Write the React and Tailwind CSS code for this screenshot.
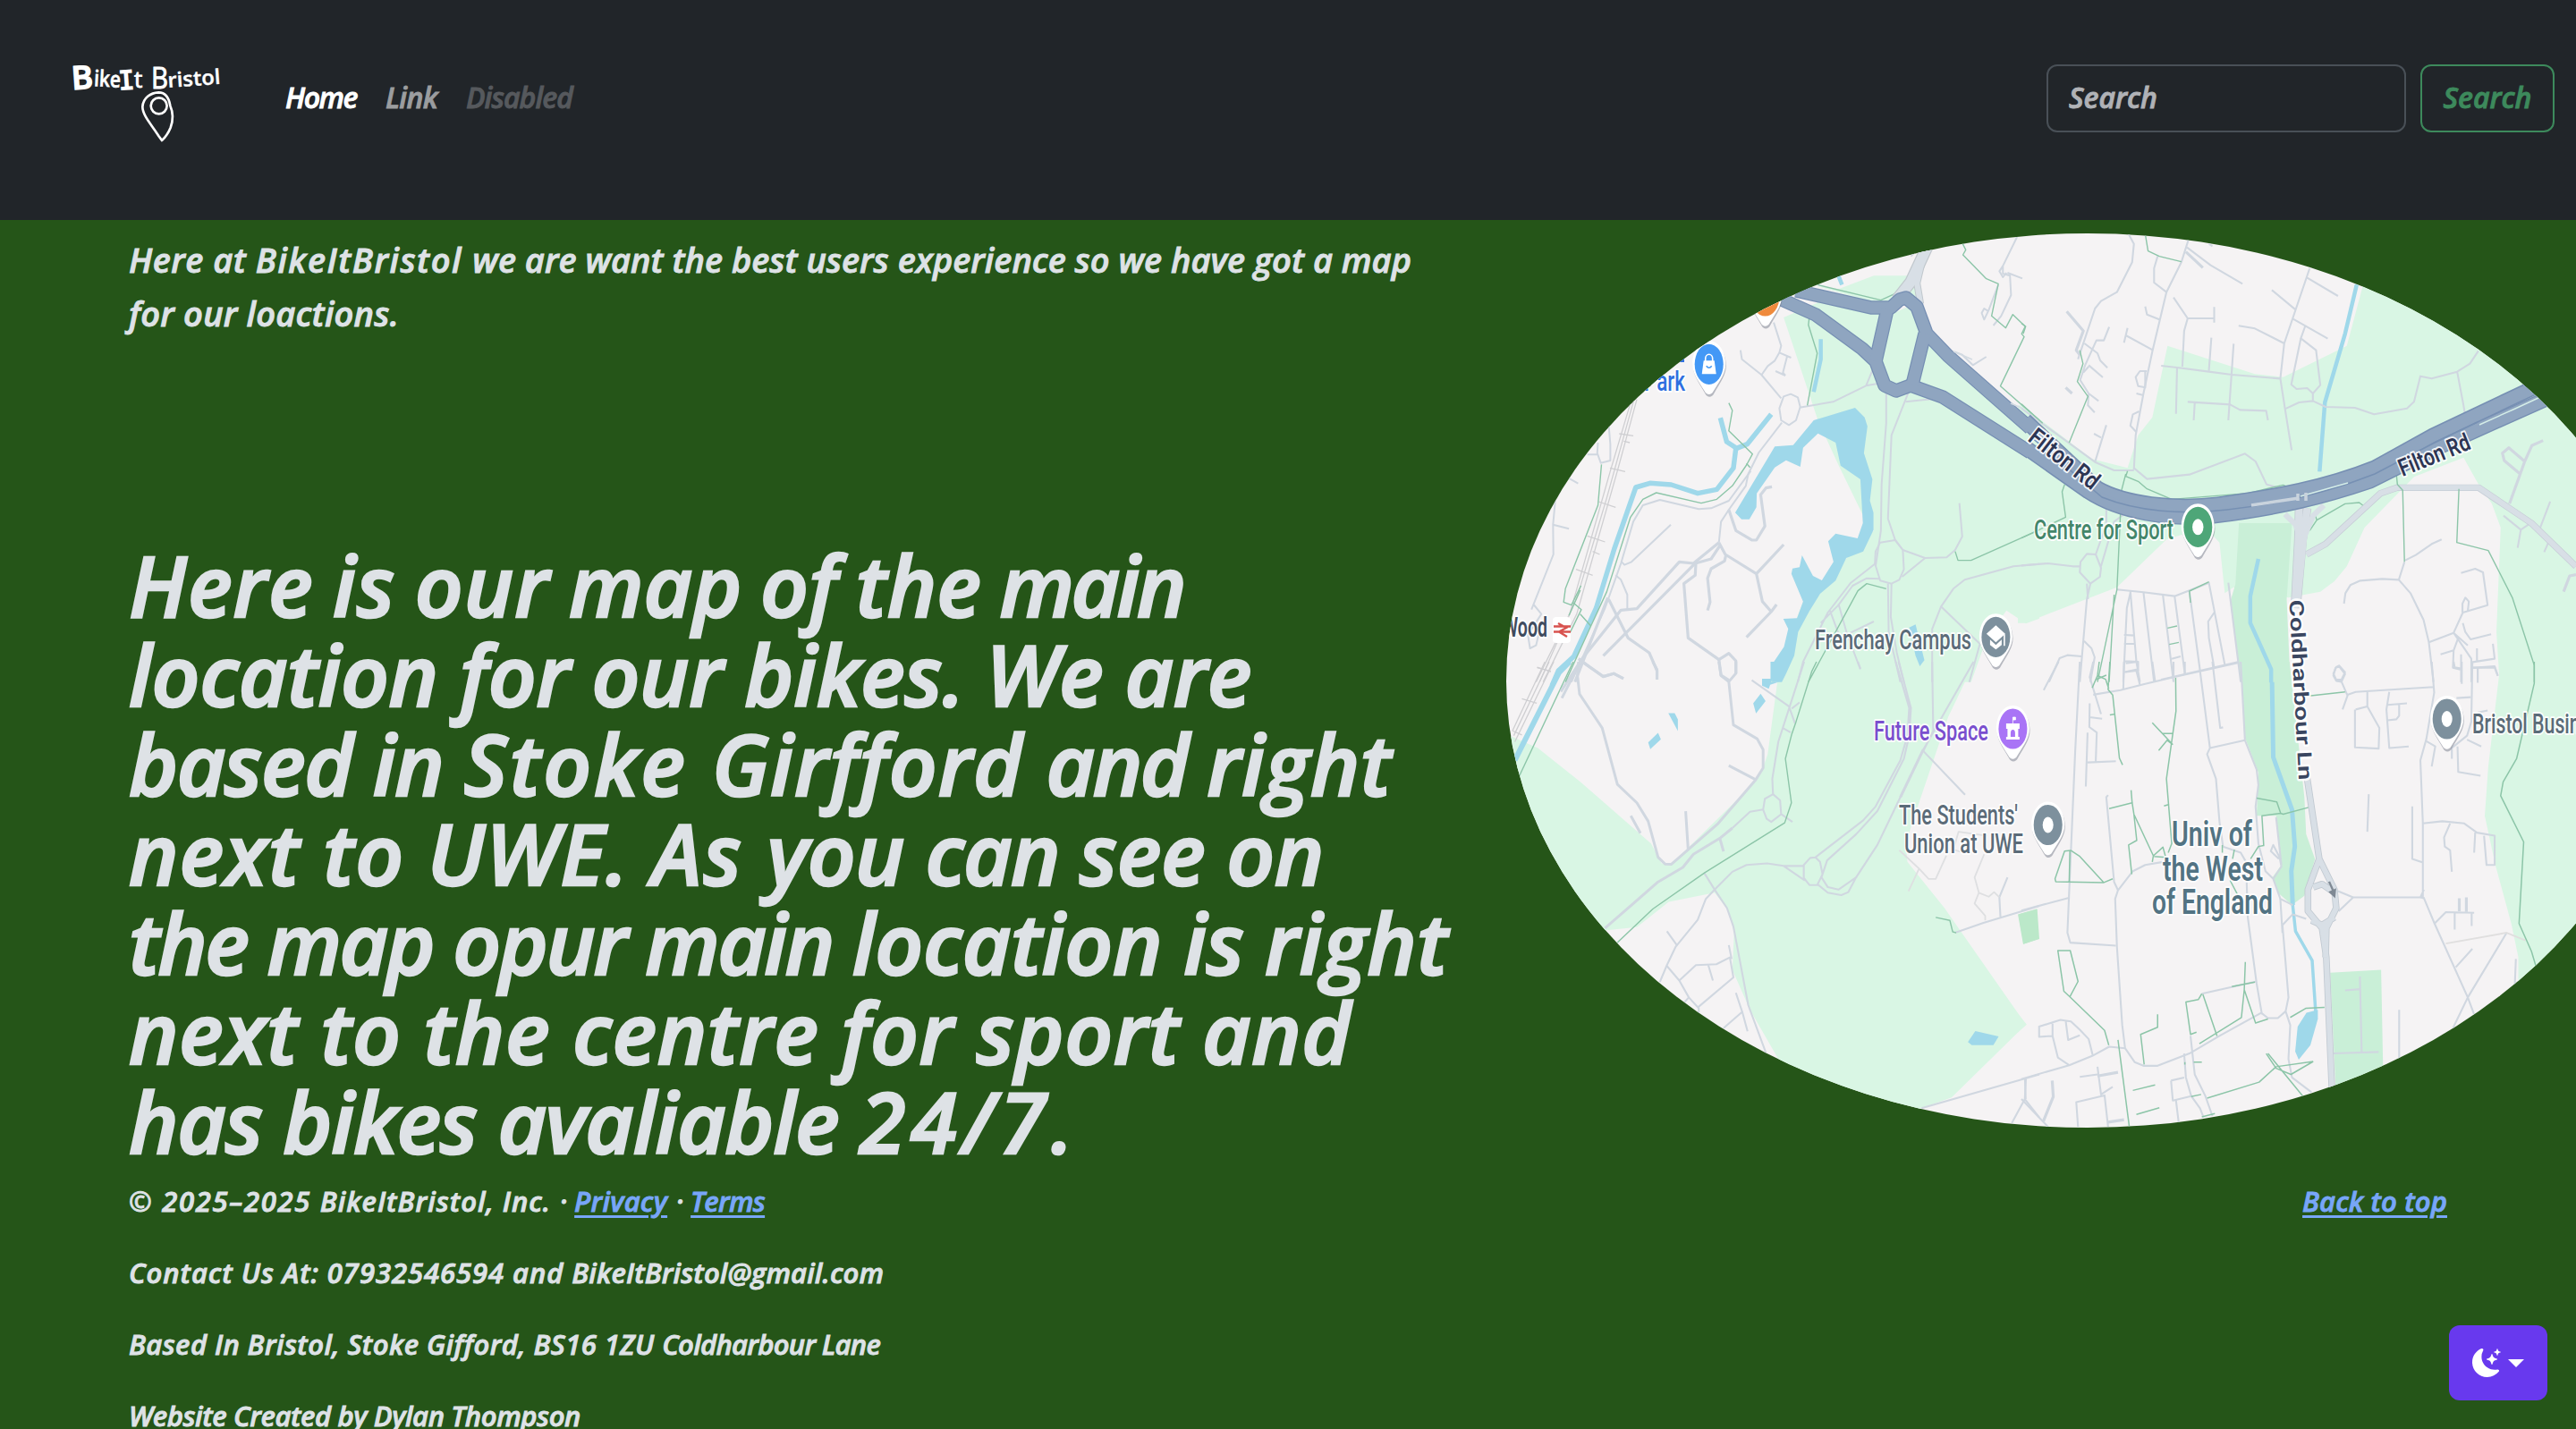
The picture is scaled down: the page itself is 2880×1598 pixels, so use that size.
import React from "react";

const SANS = "'Open Sans', 'Noto Sans', sans-serif";

/* Each map sheet is drawn in its own local units and scaled into page pixels. */
const SHEETS = {
  nw: "translate(1660 240) scale(0.39541 0.33333)",
  ne: "translate(2260 240) scale(0.39541 0.33333)",
  sw: "translate(1660 740) scale(0.39541 0.34439)",
  se: "translate(2260 740) scale(0.39541 0.34439)",
};

function Lines({ d, color = "#d0d7e0", w = 2 }) {
  return d.map((p) => (
    <path key={p} d={p} fill="none" stroke={color} strokeWidth={w} strokeLinejoin="round" vectorEffect="non-scaling-stroke" />
  ));
}

function Areas({ d, color }) {
  return d.map((p) => <path key={p} d={p} fill={color} />);
}

const GREEN = "#d9f6e4";
const WOOD = "#c9efd7";
const WATER = "#9fd8ea";
const FOOT = "#8cc5a8";

function LandNW() {
  return (
    <g transform={SHEETS.nw}>
      <Areas color={GREEN} d={[
        "M845 345L945 293L1140 340L1230 290L1262 420L1568 715V1355L1530 1372L1475 1328L1420 1420L1375 1568H810L900 1300L1100 1060L1070 1010L1000 840L942 690Z",
        "M1000 250L1100 205H1205L1240 290L1130 305L940 240Z",
      ]} />
      <Areas color={WATER} d={[
        "M708 1000L820 778L872 773L930 690L1047 648L1074 680L1082 710L1072 800L1096 888L1089 960L1099 1000V1058L1070 1130L1022 1152L992 1228L948 1272L918 1330L886 1400L875 1480L852 1540L840 1568H812V1510L846 1450L858 1390L844 1356L883 1354L900 1298L867 1205L870 1187L890 1183L897 1143L928 1212L953 1227L986 1165L971 1096L992 1070L1054 1086L1069 1035L1062 888L1006 842L992 765L942 734L900 782L892 846L852 824L820 848L769 935L768 982L748 1022H726Z",
        "M1200 1385L1218 1375L1243 1495L1230 1515L1218 1480Z",
      ]} />
      <Lines color={WATER} w={4.5} d={["M950 418V485L930 595", "M1000 205L1010 235"]} />
      <Lines color={WATER} w={5.5} d={["M810 670L742 770L712 784L684 762L666 682", "M710 784L703 850L656 922L602 935L527 906L467 901L427 915L366 1122L315 1320L252 1482L208 1530L190 1580"]} />
    </g>
  );
}

function LandNE() {
  return (
    <g transform={SHEETS.ne}>
      <Areas color={GREEN} d={[
        "M0 640L200 820L300 850L330 740L370 680L413 440L660 535L740 545L920 440L965 240L1000 200L1568 240V1568H1352L1343 1400L1355 1050L1330 970L1290 900L1250 815L1110 880L970 1050L920 1180L885 1230L845 1265L755 1285L600 1250L575 1270L560 1100L520 1050L410 1090L270 1250L10 1370H-10V640Z",
      ]} />
      <Areas color={WOOD} d={["M615 1035H765L750 1290L760 1568H620L590 1300L605 1240Z"]} />
      <Lines color={WATER} w={4.5} d={["M948 235L915 400L858 630L843 862", "M670 1155L647 1280V1370L670 1430L706 1525V1570"]} />
    </g>
  );
}

function LandSW() {
  return (
    <g transform={SHEETS.sw}>
      <Areas color={GREEN} d={[
        "M835 0L800 300L785 350L765 390L530 655H500L470 590L270 390L150 280L60 235L0 240V870L345 872L430 862L520 780L650 750L690 810L705 880L700 1000L750 1130L830 1290L1000 1500L1230 1452L1320 1415L1530 1178L1300 800L1195 650L1190 590L1230 450L1310 180L1385 0Z",
      ]} />
      <Areas color="#bbe8c9" d={["M1510 820L1562 803L1568 900L1523 917Z"]} />
      <Areas color={WATER} d={["M808 0H862L850 30L832 65L807 75L803 88L784 78V55H808Z", "M780 104L794 128L767 168L759 135Z", "M519 167H537L546 187V225Z", "M490 231L498 252L468 284L462 262Z", "M1387 1199L1453 1217L1438 1245H1377L1366 1235Z", "M1225 0H1241L1233 14Z"]} />
      <Lines color={WATER} w={6} d={["M240 0L210 35L85 320"]} />
    </g>
  );
}

function LandSE() {
  return (
    <g transform={SHEETS.se}>
      <Areas color={WOOD} d={["M620 0H758L800 440L805 560L830 640L800 760L765 790L725 750L710 700L735 660L720 500H665L670 360L630 240Z", "M873 1010L1017 1000L1023 1350L890 1420Z"]} />
      <Areas color={GREEN} d={["M1355 0H1568V1200H1405V960L1385 850L1340 660L1310 500L1320 340Z", "M-12 1140L15 1178L-12 1205Z"]} />
      <Areas color="#bbe8c9" d={["M-10 820L43 803L48 900L5 917Z"]} />
      <Areas color={WATER} d={["M806 1140L838 1130V1160L817 1245L784 1292L774 1265L781 1185Z"]} />
      <Lines color={WATER} w={5} d={["M700 0L708 30L712 310L765 480L773 600L763 680L767 790"]} />
      <Lines color={WATER} w={3.5} d={["M766 780L775 875L822 970L832 1140"]} />
    </g>
  );
}

function RoadsNW() {
  return (
    <g transform={SHEETS.nw}>
      <Lines color="#cfcfd2" w={1.3} d={["M415 620L355 860L240 1340L145 1568", "M430 620L375 860L260 1340L165 1568", "M422 620L345 950L262 1280L155 1568", "M380 735L420 742M393 760L410 765M354 850L397 862M322 963L370 982M290 1078L340 1098M305 1130L325 1140M258 1190L305 1210M148 1520L187 1532"]} />
      <Lines w={2} d={[
        "M838 616L782 537L727 485L723 455", "M817 362L838 440L833 463L866 480M833 463L820 490L800 508L783 537M855 475L843 530L850 540M822 525L850 540",
        "M833 650L845 610L865 602L885 613L892 645L880 690L860 706L838 690Z", "M890 647L985 628L1078 574L1115 566M1078 574L1097 520",
        "M840 698L775 798L745 870L738 910L690 990L668 1030L662 1100",
        "M1135 590V700L1122 905L1120 1060L1105 1180M1200 590L1150 740L1140 1020L1160 1090L1182 1125",
        "M1118 1100L1160 1092L1182 1125L1185 1190L1172 1225L1150 1238L1118 1228L1103 1170L1105 1130Z", "M1182 1125L1245 1152L1306 1150L1330 1125L1350 1080L1342 968M1245 1152L1180 1215",
        "M1568 1172L1495 1180L1357 1225L1325 1255L1290 1315L1265 1390V1568M1290 1315L1400 1440L1370 1568",
        "M1105 1170L1035 1235L970 1335L900 1500L885 1568M1118 1222L1080 1220L1040 1245L1000 1310L950 1370M975 1325L1000 1405M1000 1305L1025 1410L1062 1525M1030 1405L1100 1365",
        "M1140 1238L1142 1400L1175 1568M1150 1238L1148 1350L1165 1470L1185 1568", "M1190 628L1270 618",
        "M320 765L318 800L328 833L355 825V770L350 700M290 805H318M238 885L264 902M200 950L193 1040L238 1054M193 1040L194 1140L132 1325M138 1308L160 1340L122 1410L128 1455L145 1445L152 1410",
        "M752 860L690 960L640 985L605 988L495 957L447 975L420 1030L385 1170L340 1320L245 1568", "M387 1165L395 1175L415 1165L526 1040M370 1210L385 1225L403 1275V1325",
        "M1225 115L1205 140M1505 75L1465 172V198L1485 205L1488 270L1460 340L1438 372M1465 172L1455 190L1465 210L1475 195M1478 195L1520 214M1452 235L1425 320L1412 352L1405 330L1412 315L1425 325M1328 460L1350 470L1380 505L1418 477",
      ]} />
      <Lines w={3.2} d={[
        "M690 990L710 1060L755 1092H768L792 1045L780 940L795 917L812 913", "M662 1100L590 1170L550 1165L430 1322L385 1327L275 1490L215 1600", "M662 1100L680 1140L768 1205L845 1107M768 1205L785 1298L810 1332L740 1418M810 1332L825 1308",
        "M665 1110L640 1155L595 1170L335 1480", "M597 1165L595 1210L563 1238L575 1420L662 1493L690 1472L710 1497V1540", "M682 1142L678 1162L640 1188L630 1220L637 1300L630 1328", "M350 1290L405 1420L465 1470L487 1530V1560", "M348 1285L255 1568M265 1490L335 1550L365 1540L392 1556", "M662 1493L668 1545L690 1562",
      ]} />
      <Lines color={FOOT} w={1.4} d={[
        "M690 632L700 657L690 725L757 803L740 840L700 910L656 955L612 968L485 933L447 955L412 1015L345 1265L300 1380L228 1568", "M740 835L750 848",
        "M917 350L915 370L940 465L912 640", "M330 838L320 975L228 1255L223 1300L245 1310L272 1245M248 1300L273 1325L242 1400M270 1340L300 1380M270 1260L238 1345",
        "M940 235L1120 287L1160 265", "M1350 95L1360 118L1352 135L1418 215L1452 232L1433 340L1473 380L1493 335L1528 375L1518 400L1525 410L1458 575L1568 690",
        "M1568 1058L1375 1160H1338L1330 1130", "M1135 1255L1080 1238L1055 1262L915 1568",
      ]} />
      <Lines color="#c1c8cd" w={14} d={["M1250 110L1205 225L1165 285"]} />
      <Lines color="#c1c8cd" w={8} d={["M1245 115L1222 230L1232 300"]} />
      <Lines color="#d8dfe6" w={11.5} d={["M1250 110L1205 225L1165 285"]} />
      <Lines color="#d8dfe6" w={6} d={["M1245 115L1222 230L1232 300"]} />
    </g>
  );
}

function RoadsNE() {
  return (
    <g transform={SHEETS.ne}>
      <Lines w={2.1} d={[
        "M303 65L318 98L313 160L270 260L225 290L208 315L160 485", "M472 85L452 160L410 260L370 460L345 600L323 740L318 855", "M468 110L535 170L625 232", "M385 140L375 180V228L410 260M350 308L355 335L390 352M300 380L290 430M295 405L372 455M430 278L470 348H543M545 310V362M470 348L460 390L455 510M537 413L530 523M600 433L585 690M395 507L440 513L530 527L595 537L732 550",
        "M440 513L437 668M470 628L590 637L618 655L692 658L697 690M490 632L487 690", "M815 180L743 432L732 550L745 650L764 790M808 212L895 273M708 253L776 320M768 350L866 416M614 373L660 382L743 432M802 375L790 415L833 455L845 572L824 600L808 582L778 585L763 570L790 415M824 600V625M745 652L785 630L824 625L860 645L943 648L997 670L1090 650L1110 628L1128 542L1160 550L1232 527L1268 500L1292 457M1232 527L1250 640L1257 690",
        "M178 432L215 465L223 490L243 514M248 377L233 422H212L180 505L166 555L190 600L218 625M190 505L230 546M190 600L188 640L207 664M190 510L175 530", "M0 650L110 745L208 830L262 858H318", "M240 706L208 830M205 735L225 748", "M355 525H335L323 545L330 575L350 580V525M325 600L345 606M333 660L315 670L308 708L325 730",
        "M318 850L355 887L475 872L632 802L662 828L693 905L740 920", "M240 978V1040L210 1140L185 1138L167 1165L165 1200L195 1238L222 1215L225 1185L210 1140M165 1180L145 1180L75 1170L0 1177M225 1180L262 1030L290 1005M195 1238L185 1290L165 1568M185 1238L188 1290",
        "M270 1258L345 1267L433 1280L530 1235L575 1510M308 1268L298 1320L288 1568M345 1267L375 1568M400 1277L430 1568M433 1280L462 1540M475 1265L505 1530M545 1335L528 1365L530 1420L545 1520M585 1235L620 1568M395 1560L615 1500M290 1410L320 1412M290 1440H320M292 1498L330 1500M290 1535L330 1525M425 1490L450 1482M308 1265L325 1500L335 1568",
        "M177 1430L198 1455L207 1485L195 1568M170 1482L130 1478L108 1488L78 1568",
        "M1083 1165L1067 1225L1020 1222L958 1228L930 1243L916 1270L912 1305M1067 1225L1100 1270L1137 1360L1152 1435L1165 1568M1085 1160L1115 1142L1160 1105L1188 1090M1152 1435L1222 1403L1248 1335L1318 1310L1305 1200L1283 1188L1243 1202M1247 1335V1305L1255 1285L1265 1298L1262 1330M1222 1403L1272 1490V1568M1248 1370L1255 1400L1270 1425L1328 1408M1185 1475L1222 1462L1235 1420M1222 1462L1220 1520L1243 1527M1243 1475V1568M1272 1502L1338 1490L1333 1440M1288 1455V1500M1275 1520H1338L1347 1548M1290 1520V1560M1222 1403L1262 1445",
        "M898 1513L915 1535L905 1560H890L882 1540L890 1518Z", "M1363 1010L1412 1057L1440 1035M1412 1057L1403 1118M1495 963L1467 1050M1490 1100L1478 1132", "M530 98L540 106",
      ]} />
      <Lines w={3.2} d={["M128 325L175 390L155 455L165 470", "M465 125L513 178", "M125 580L143 600", "M1475 758L1443 775L1423 828L1380 970M1423 828L1378 782L1360 800L1365 825L1410 870", "M1568 1208L1550 1212L1533 1265"]} />
      <Lines color="#c6cdd6" w={7.4} d={["M806 1140L860 1105L1015 935L1062 916H1293L1442 1035L1568 1180"]} />
      <Lines color="#d8dfe6" w={6} d={["M806 1140L860 1105L1015 935L1062 916H1293L1442 1035L1568 1180"]} />
      <Lines color={FOOT} w={1.4} d={["M350 65L358 122L390 140L452 158", "M165 455L174 500L158 560L188 610L135 765", "M295 870L283 925M295 878L330 895L355 920L425 955L640 935L740 907L755 915M295 878L300 860", "M122 905L115 930L125 1015L0 1085M283 925L270 1258L215 1568M262 1275L248 1568", "M530 1232L475 1263L478 1302M413 1387L440 1380M418 1442L445 1435M210 1560L240 1545", "M1060 870L1063 905L1078 925L1083 1165M1237 920L1231 1100L1320 1127L1388 1285L1450 1512V1568", "M815 1060L835 1025L915 970L955 966L965 975M835 1025L830 1005", "M0 365L12 375L5 400M0 635L60 700"]} />
      <Lines color="#c1c9d1" w={9.5} d={["M785 985L783 1090L773 1320", "M808 985L795 1090L780 1290"]} />
      <Lines color="#d8dfe6" w={8} d={["M785 985L783 1090L773 1320M808 985L795 1110L780 1290"]} />
      <Lines color="#d8dfe6" w={6} d={["M745 1005L775 1040L790 1090M855 975L825 1010L800 1080"]} />
    </g>
  );
}

function RoadsSW() {
  return (
    <g transform={SHEETS.sw}>
      <Lines color="#cfcfd2" w={1.3} d={["M170 0L78 225M182 0L82 240M195 0L85 260M148 18L187 32M105 120L147 135M80 225L105 238"]} />
      <Lines w={3} d={["M265 0L262 45L268 105L332 215L375 398L430 458L462 518L490 635L510 657L527 658L575 610L660 525L765 385L787 345V285L770 250L703 205L690 65L710 38V0M662 0L668 45L690 65", "M275 0L335 48L365 38L392 55M475 0L487 25V48M268 5L218 118", "M568 485L575 610M690 337L765 382M413 500L440 557", "M340 865L420 785L490 715L560 668L590 625L665 573L700 540M665 575L675 616", "M1240 285L1175 440"]} />
      <Lines w={2.1} d={["M903 0L830 260L813 380L815 430L835 450L838 495L810 520L797 510L787 480L792 445L815 430M787 480L750 487L700 540M838 495L870 520M755 60L860 145L877 200M890 132L868 152M843 215L865 230M1055 0L1062 22", "M1162 0L1200 150L1195 240L1175 320L1105 470L1070 515L935 635L920 637L902 660V702L918 725H940L955 690L948 650L935 635M1170 0L1205 150L1200 240L1185 315L1110 485L1050 560L968 645L952 700L970 732L1000 740L1050 700L1028 748L1008 758L970 750L940 722", "M902 663H845L798 655L740 660L700 682L650 740L625 770L602 838L540 925L515 985L495 1040M845 663L905 710M620 685L650 740L685 800L703 860L745 1115L795 1270", "M515 875L543 920M515 988L550 1035L577 1090L605 1125V1140M550 1035L597 985L655 982L693 960L703 1025L603 1122M632 985L645 1035M690 920L698 965M577 1090L565 1105M675 1190L728 1137L710 1075M728 1137L743 1200", "M1382 0L1240 285L1175 440L1110 595L1050 700M1265 0L1268 225L1240 290L1358 432", "M1568 793L1410 848L1330 880M1458 828L1455 765L1478 700", "M1235 1450L1568 1340M1530 1355L1527 1420L1490 1498M1527 1420L1568 1480"]} />
      <Lines color="#dedfe1" w={1.8} d={["M1172 612L1228 672L1198 745M1228 672L1255 705H1275L1305 630M1340 550L1325 610L1345 617M1412 625L1385 700L1397 750L1385 785L1415 825V840M1397 750L1425 763L1440 748L1455 765M1340 552L1420 565"]} />
      <Lines color={FOOT} w={1.4} d={["M250 0L98 370", "M938 0L925 30L880 195L868 235L850 315L867 458L848 523L622 685L475 803L375 912", "M1275 830L1315 840L1323 877L1333 880"]} />
    </g>
  );
}

function RoadsSE() {
  return (
    <g transform={SHEETS.se}>
      <Lines w={2.1} d={[
        "M165 0L152 290L130 880L138 912L267 922M203 0L193 50L225 170M203 107L280 92L350 72L430 50L615 3M193 135L192 212L213 230L210 325M193 180L228 185M187 230L182 405M187 327L267 323M105 0L63 92",
        "M505 30L533 280L525 300L550 380L560 520L570 600M540 0L562 215L570 213M533 280L632 255M620 0L632 255L665 350L670 400L662 470L670 590L690 680L712 705L735 665L730 635L712 595L705 615L728 640M720 505L735 660M712 705L732 770L767 790",
        "M290 0L288 90M295 5L330 0V30M295 33L330 28M325 30L335 75M370 0L378 65M430 0V50M462 0V42",
        "M245 433L240 440L262 715L273 742L265 770L270 925L285 1180L293 1255L320 1300L345 1312H385L475 1272L560 1215L678 1140L697 1157H725L747 1135L760 1180L755 1290L765 1350L820 1398M273 742L315 680L350 660L400 650M570 600L620 620L635 650L640 830L665 1045L680 1145M767 820L738 855L755 1090L747 1135M732 770L738 880M767 820L805 835",
        "M0 808L132 767M293 1255L248 1250L200 1280L135 1310L0 1355M135 1310L103 1285L88 1215L50 1218V1185L110 1163L140 1168L165 1195L190 1225L202 1280M88 1175V1215M125 1165L132 1228L165 1213",
        "M0 1420L75 1510M10 1355L12 1420M165 1348L215 1340M215 1315L225 1405L258 1380M160 1510L155 1430L235 1408L245 1510M423 1360L460 1350M423 1360L428 1425L483 1410M437 1425L445 1500M460 1272L465 1350L480 1410L505 1450L515 1480M478 1215L490 1340L520 1410L540 1475",
        "M665 1038L510 1078",
        "M895 745L938 765H1135V525L1190 518L1252 525L1288 555L1338 565V660H1315L1308 565M938 765L897 810M1138 768L1128 765L1138 740M1283 555L1280 620M1212 525L1195 570L1197 600L1212 612L1217 682M1105 470V640L1135 652M982 430L978 552",
        "M898 15L915 40L905 65L890 62L882 45L888 20ZM905 65L922 110L908 155M920 108L945 98L1165 82M943 155V278L1010 282L1012 215L978 145L945 155M978 145V98M1040 98L1032 155L1040 280L1095 275M1035 140L1090 135M1068 140V175L1060 187L1035 190M1160 0L1167 100L1145 250L1128 320L1135 525M1137 765L1168 850L1262 1090L1280 1145M1168 850L1200 813L1280 815M1225 815V870M1273 815V858M1228 992L1275 932M1398 965L1395 1050M1372 880L1262 1090L1220 1190",
        "M1145 258L1170 275L1160 340M1217 315V280L1260 240L1272 195L1275 0M1233 275L1235 358L1298 370M1260 253L1300 275M1230 118L1270 115M1290 165L1318 158M1275 20L1338 15L1347 45M1290 20V68M1245 0V72M1222 0L1225 18L1243 22",
        "M957 1022L962 1270M915 1067L957 1063M880 1272L1010 1267M1068 1130V1290",
      ]} />
      <Lines w={3.2} d={["M215 1345L273 1333M87 1360L90 1412L62 1492M245 1495L290 1487M1238 768V810M1258 765V812"]} />
      <Lines color="#e0dfdf" w={2} d={["M1200 915L1372 880L1425 905"]} />
      <Lines color={FOOT} w={1.5} d={["M220 0L215 45L200 85M250 0L245 90L258 108L277 313L286 335M215 45L238 57L247 88M250 173L265 170", "M436 52L437 160L410 380L425 590L415 620M370 198L427 268L412 255L388 288M397 233H428M403 468L418 463", "M248 477L313 458L310 417M313 458L318 495L373 630L370 650M373 630L400 602L408 635L375 632M318 495L326 580L303 595L312 690", "M258 705L233 717L97 714L95 705L122 615L140 613L165 632L233 717M137 613L135 717", "M103 938H138L160 1038L137 1088L120 1070ZM137 1088L235 1197L247 1245M385 1145V1187L337 1210L347 1308M273 1228L305 1510", "M665 443L722 455L733 492L680 500L685 597L670 600L648 640M733 492L740 495L812 473M568 595V620M602 610L597 640M590 710L615 765", "M633 975L630 1065L662 1173L697 1160M660 1040L595 1055M510 1078L500 1097L465 1105L478 1210L495 1203M513 1080L553 1215M630 1065L622 1155L503 1240M487 1300H510M462 1300V1308M480 1412L508 1405", "M760 1155L805 1125L857 1122M525 1417L672 1365L720 1315L825 1298M692 1272L720 1320L762 1340L825 1298M697 1272L795 1410M315 1392L378 1374M325 1470L390 1448M510 1478L547 1467", "M795 113L915 98", "M1450 0V70L1400 315L1362 390L1355 435L1420 585L1407 850L1442 940L1455 990"]} />
      <Lines color="#c1c9d1" w={7.5} d={["M808 380L842 640L810 740V810L850 865L862 960L878 1390M842 640L885 740L890 800L862 865L860 960M825 732L850 722L885 750M820 840L850 855L885 830"]} />
      <Lines color="#d8dfe6" w={5.8} d={["M808 380L842 640L810 740V810L850 865L862 960L878 1390M842 640L885 740L890 800L862 865L860 960M825 732L850 722L885 750M820 840L850 855L885 830"]} />
      <path d="M870 714L882 745" stroke="#7f8994" strokeWidth="6" />
      <path d="M868 747L890 735L887 768Z" fill="#7f8994" />
    </g>
  );
}

/* Dual carriageway in page pixels. */
const MOTORWAY = [
  "M2008 325L2092 344H2114L2124 335L2131 333L2143 343L2154 373L2178 398L2270 479",
  "M1992 335L2030 352L2082 390L2097 404L2107 431L2120 437L2136 431L2172 444L2270 506",
  "M2110 346L2097 404M2152 373L2138 430",
];
const TRUNK = [
  "M2264 470L2345 546C2375 563 2430 570 2480 564C2545 555 2600 545 2655 523L2720 487L2800 449L2834 433",
  "M2264 500L2335 550C2370 573 2425 582 2475 577C2550 568 2600 555 2650 538L2720 503L2800 467L2856 442",
];

function Motorway() {
  return (
    <g>
      <Lines color="#768fb3" w={15.5} d={MOTORWAY} />
      <Lines color="#768fb3" w={17} d={TRUNK} />
      <Lines color="#8fa5c0" w={13} d={MOTORWAY} />
      <Lines color="#8fa5c0" w={14} d={TRUNK} />
      <Lines color="#7690b3" w={1.6} d={["M2270 488L2350 556C2390 572 2440 576 2490 570C2560 562 2610 548 2655 530L2720 496L2770 472"]} />
      <Lines color="#d5eee8" w={1.4} d={["M2572 555L2625 540M2772 475L2812 457L2840 444"]} />
      <Lines color="#c9d3dd" w={3.5} d={["M2517 565L2570 557M2569 552V560M2578 551V560"]} />
      <Lines color="#d3dbe2" w={1.6} d={["M2184 393L2205 402M2248 451L2262 457"]} />
    </g>
  );
}

function Pin({ x, y, color, children }) {
  return (
    <g transform={`translate(${x} ${y})`}>
      <path d="M0 -25C11 -25 18.500 -14 18.500 0C18.500 10 13 17 5 31C2.500 36 -2.500 36 -5 31C-13 17 -18.500 10 -18.500 0C-18.500 -14 -11 -25 0 -25Z" fill="#6b7280" opacity="0.45" transform="translate(0.6 1.8)" />
      <path d="M0 -26C11 -26 18.500 -14 18.500 0C18.500 10 13 17 5 30C2.500 35 -2.500 35 -5 30C-13 17 -18.500 10 -18.500 0C-18.500 -14 -11 -26 0 -26Z" fill="#fff" />
      <ellipse rx="16" ry="22.600" fill={color} />
      {children}
    </g>
  );
}

function Label({ x, y, w, size = 31, weight = 500, color, rotate = 0, children }) {
  return (
    <text
      transform={`translate(${x} ${y}) rotate(${rotate})`}
      textLength={w}
      lengthAdjust="spacingAndGlyphs"
      fontFamily="Roboto, sans-serif"
      fontSize={size}
      fontWeight={weight}
      fill={color}
      stroke="#ffffff"
      strokeWidth="4"
      strokeOpacity="0.9"
      strokeLinejoin="round"
      paintOrder="stroke"
    >
      {children}
    </text>
  );
}

function CampusMap() {
  return (
    <svg className="block h-[1000px] w-[1300px] max-w-none rounded-[50%] bg-[#f5f3f4]" viewBox="1684 261 1300 1000">
      <LandSW />
      <LandSE />
      <LandNW />
      <LandNE />
      <RoadsSW />
      <RoadsSE />
      <RoadsNW />
      <RoadsNE />
      <Motorway />

      <rect x="1875" y="401" width="8" height="4" fill="#2f6fe0" />
      <Label x={1838} y={436.500} w={46} color="#2f6fe0">Park</Label>
      <Label x={1680} y={711.700} w={50} weight={600} color="#3f4b5e">Wood</Label>
      <rect x="1736" y="690" width="20" height="29" rx="4" fill="#fff" />
      <path d="M1737 700.500H1756M1737 706.500H1756M1742 697L1751 702L1743 706.500L1752 712" fill="none" stroke="#d8534f" strokeWidth="2.400" />

      <Label x={2029} y={725.700} w={175} color="#5b6b78">Frenchay Campus</Label>
      <Label x={2274} y={602.500} w={156} color="#43866a">Centre for Sport</Label>
      <Label x={2095} y={827.800} w={128} color="#7a4fce">Future Space</Label>
      <Label x={2123} y={921.800} w={133} color="#5b6b78">The Students'</Label>
      <Label x={2129} y={953.500} w={133} color="#5b6b78">Union at UWE</Label>
      <Label x={2764} y={819.500} w={154} color="#5b6b78">Bristol Business</Label>
      <Label x={2428} y={945.600} w={90} size={39} weight={600} color="#527383">Univ of</Label>
      <Label x={2418} y={985.200} w={112} size={39} weight={600} color="#527383">the West</Label>
      <Label x={2406} y={1022.400} w={135} size={39} weight={600} color="#527383">of England</Label>
      <Label x={2266} y={492} w={92} size={27} weight={600} color="#2d3553" rotate={38}>Filton Rd</Label>
      <Label x={2686} y={533} w={84} size={27} weight={600} color="#2d3553" rotate={-22}>Filton Rd</Label>
      <Label x={2559.500} y={671} w={202} size={22} weight={600} color="#3a4660" rotate={87}>Coldharbour Ln</Label>

      <Pin x={1973.600} y={331} color="#ef8a3c">
        <path d="M5 3V9" stroke="#fff" strokeWidth="2" />
      </Pin>
      <Pin x={1910.700} y={407.300} color="#4398f6">
        <path d="M-6 -4H6L8 11H-8Z" fill="#fff" />
        <path d="M-4 -3V-6A4 5 0 0 1 4 -6V-3" fill="none" stroke="#fff" strokeWidth="1.600" />
        <path d="M-3 2Q0 6 3 2" fill="none" stroke="#4398f6" strokeWidth="1.500" />
      </Pin>
      <Pin x={2231.400} y={712.300} color="#7d909d">
        <path d="M0 -13L10.500 -3.500L0 6L-10.500 -3.500Z" fill="#fff" />
        <path d="M-6.500 3V9L0 14L6.500 9V3L0 9Z" fill="#fff" />
        <path d="M9.500 -3V10" stroke="#fff" strokeWidth="1.600" />
      </Pin>
      <Pin x={2250.400} y={815} color="#a974f6">
        <path d="M-7.500 -6H7.500V0H6V9H7.500V12H-7.500V9H-6V0H-7.500Z" fill="#fff" />
        <path d="M0 -6V-13H3V-10H0" fill="#fff" stroke="#fff" strokeWidth="0.800" />
        <path d="M-2.500 9V5A2.500 4 0 0 1 2.500 5V9Z" fill="#a974f6" />
      </Pin>
      <Pin x={2289.700} y={922.500} color="#7d909d"><ellipse rx="6" ry="9" fill="#fff" /></Pin>
      <Pin x={2457.300} y={589.300} color="#4ea678"><ellipse rx="6.200" ry="9" fill="#fff" /></Pin>
      <Pin x={2735.700} y={804} color="#7d909d"><ellipse rx="6" ry="9" fill="#fff" /></Pin>
    </svg>
  );
}

function Logo() {
  const hand = { fontFamily: SANS, fill: "#fff", stroke: "#fff", fontWeight: 600 };
  return (
    <svg className="mt-2.5 h-[110px] w-[190px] shrink-0 not-italic" viewBox="0 0 190 110">
      <text {...hand} x="10" y="39.500" fontSize="36" strokeWidth="1.500" textLength="24" lengthAdjust="spacingAndGlyphs" transform="rotate(-4 20 30)">B</text>
      <text {...hand} x="35" y="37" fontSize="25" strokeWidth="0.600" textLength="30" lengthAdjust="spacingAndGlyphs" transform="rotate(3 50 30)">ike</text>
      <text {...hand} x="62" y="40.500" fontSize="31" strokeWidth="0" fontFamily="'DejaVu Sans Mono', monospace" transform="rotate(-4 74 30)">I</text>
      <text {...hand} x="80" y="38" fontSize="26" strokeWidth="0.900" fontWeight="500">t</text>
      <text {...hand} x="99" y="39" fontSize="33" strokeWidth="0.900" fontWeight="500" textLength="19" lengthAdjust="spacingAndGlyphs">B</text>
      <text {...hand} x="118" y="38" fontSize="23" strokeWidth="0.400" textLength="59" lengthAdjust="spacingAndGlyphs" transform="rotate(-4 118 38)">ristol</text>
      <g transform="scale(0.33333)" fill="none" stroke="#fff" strokeWidth="8" strokeLinejoin="round">
        <path d="M268 178C270 148 295 131 322 130C348 130 357 150 361 175C373 203 371 224 362 248C355 265 345 280 333 291L322 276C300 240 268 208 268 178Z" />
        <ellipse cx="323" cy="175" rx="27" ry="27" />
      </g>
    </svg>
  );
}

function Navbar() {
  return (
    <header className="h-[246px] bg-[#212529]">
      <div className="flex h-[220px] items-center pr-6 pl-[70px]">
        <Logo />
        <nav className="ml-[59px] flex items-center gap-8 pb-0.5 text-[32px] leading-[48px]">
          <a className="w-[80px] tracking-[-1.45px] text-white">Home</a>
          <a className="w-[58px] tracking-[-0.64px] text-[#9b9d9f]">Link</a>
          <a className="tracking-[-0.94px] text-[#56595d]">Disabled</a>
        </nav>
        <form className="ml-auto flex gap-4 text-[32px] leading-[48px]">
          <div className="h-[76px] w-[402px] rounded-xl border-2 border-[#495057] px-[23px] pt-[11px] text-[#b0b2b6]">Search</div>
          <button type="button" className="h-[76px] w-[150px] rounded-xl border-2 border-[#3d8a5c] pb-0.5 text-center text-[#3d8a5c] italic">Search</button>
        </form>
      </div>
    </header>
  );
}

function Story() {
  return (
    <div className="w-[1540px] whitespace-pre">
      <p className="pt-[14px] text-[38px] leading-[60px]">
        <span className="block">
          <span className="tracking-[0.5px]">{"Here at "}</span>
          <span className="tracking-[1.5px]">{"BikeItBristol "}</span>
          <span className="tracking-[0.01px]">we are want the best users experience so we have got a map</span>
        </span>
        <span className="block tracking-[0.22px]">for our loactions.</span>
      </p>
      <h1 className="mt-[224px] text-[94px] leading-[100px] [-webkit-text-stroke:2.5px_#dee2e6]">
        <span className="block [word-spacing:-4px]">
          <span className="tracking-[1px]">{"Here is our "}</span>
          <span className="tracking-[0.1px]">{"map of the "}</span>
          <span className="tracking-[-3.5px]">main</span>
        </span>
        <span className="block tracking-[-0.34px]">location for our bikes. We are</span>
        <span className="block">
          <span className="tracking-[-1.4px]">{"based in "}</span>
          <span className="tracking-[2.7px]">{"Stoke "}</span>
          <span className="tracking-[1px]">{"Girfford "}</span>
          <span className="tracking-[-2.5px]">{"and "}</span>
          <span className="tracking-[0.5px]">right</span>
        </span>
        <span className="block">
          <span className="tracking-[1.1px]">{"next to "}</span>
          <span className="tracking-[1px]">{"UWE. "}</span>
          <span className="tracking-[2px]">{"As "}</span>
          <span className="tracking-[-0.7px]">{"you "}</span>
          <span className="tracking-[-1.6px]">{"can "}</span>
          <span className="tracking-[-0.4px]">see on</span>
        </span>
        <span className="block">
          <span className="tracking-[-2.46px]">{"the map opur main "}</span>
          <span className="tracking-[-0.26px]">{"location "}</span>
          <span className="tracking-[-0.7px]">{"is "}</span>
          <span className="tracking-[0.1px]">right</span>
        </span>
        <span className="block tracking-[0.56px]">next to the centre for sport and</span>
        <span className="block">
          <span className="tracking-[-1.17px]">{"has bikes avaliable "}</span>
          <span className="tracking-[5.7px]">24/7.</span>
        </span>
      </h1>
    </div>
  );
}

function Footer() {
  return (
    <footer className="mt-[15px] flex items-start justify-between pr-36 pl-36 text-[31px] leading-[48px] whitespace-pre">
      <div className="flex flex-col gap-8">
        <p className="flex">
          <span className="tracking-[1.7px]">{"© 2025–2025 "}</span>
          <span className="tracking-[1px]">BikeItBristol, Inc.</span>
          <span className="ml-[10px] w-[16px]">·</span>
          <a className="tracking-[0.26px] text-[#78a6f8] underline decoration-[3px] underline-offset-4">Privacy</a>
          <span className="ml-[10px] w-[16px]">·</span>
          <a className="tracking-[-0.71px] text-[#78a6f8] underline decoration-[3px] underline-offset-4">Terms</a>
        </p>
        <p>
          <span className="tracking-[0.94px]">{"Contact Us At: 07932546594 and "}</span>
          <span className="tracking-[0.11px]">BikeItBristol@gmail.com</span>
        </p>
        <p>
          <span className="tracking-[0.4px]">{"Based In Bristol, Stoke Gifford, BS16 1ZU "}</span>
          <span className="tracking-[-0.7px]">Coldharbour Lane</span>
        </p>
        <p className="tracking-[-0.39px]">Website Created by Dylan Thompson</p>
      </div>
      <a className="tracking-[0.12px] text-[#78a6f8] underline decoration-[3px] underline-offset-4">Back to top</a>
    </footer>
  );
}

function ThemeButton() {
  return (
    <button type="button" aria-label="Toggle theme" className="absolute right-8 bottom-8 flex h-[84px] w-[110px] items-center justify-center gap-2 rounded-xl bg-[#6839ee]">
      <svg className="h-8 w-8" viewBox="0 0 16 16" fill="#fff">
        <path d="M6 .278a.77.77 0 0 1 .08.858 7.200 7.200 0 0 0-.878 3.460c0 4.021 3.278 7.277 7.318 7.277q.792-.001 1.533-.160a.79.79 0 0 1 .810.316.73.73 0 0 1-.031.893A8.350 8.350 0 0 1 8.344 16C3.734 16 0 12.286 0 7.710 0 4.266 2.114 1.312 5.124.060A.75.75 0 0 1 6 .278" />
        <path d="M10.794 3.148a.217.217 0 0 1 .412 0l.387 1.162c.173.518.579.924 1.097 1.097l1.162.387a.217.217 0 0 1 0 .412l-1.162.387a1.730 1.730 0 0 0-1.097 1.097l-.387 1.162a.217.217 0 0 1-.412 0l-.387-1.162A1.730 1.730 0 0 0 9.310 6.593l-1.162-.387a.217.217 0 0 1 0-.412l1.162-.387a1.730 1.730 0 0 0 1.097-1.097zM13.863.099a.145.145 0 0 1 .274 0l.258.774c.115.346.386.617.732.732l.774.258a.145.145 0 0 1 0 .274l-.774.258a1.160 1.160 0 0 0-.732.732l-.258.774a.145.145 0 0 1-.274 0l-.258-.774a1.160 1.160 0 0 0-.732-.732l-.774-.258a.145.145 0 0 1 0-.274l.774-.258c.346-.115.617-.386.732-.732z" />
      </svg>
      <svg className="h-[9px] w-[18px]" viewBox="0 0 18 9" fill="#fff">
        <path d="M0 0H18L9 9Z" />
      </svg>
    </button>
  );
}

export default function App() {
  return (
    <div className="relative h-[1598px] w-[2880px] overflow-hidden bg-[#255518] font-['Open_Sans','Noto_Sans',sans-serif] font-semibold text-[#dee2e6] italic [-webkit-text-stroke:0.9px_currentColor]">
      <Navbar />
      <main className="flex h-[1058px] pl-36">
        <Story />
        <div className="h-[1020px] w-[1196px] shrink-0 overflow-hidden pt-[15px] not-italic [-webkit-text-stroke:0]">
          <CampusMap />
        </div>
      </main>
      <Footer />
      <ThemeButton />
    </div>
  );
}
